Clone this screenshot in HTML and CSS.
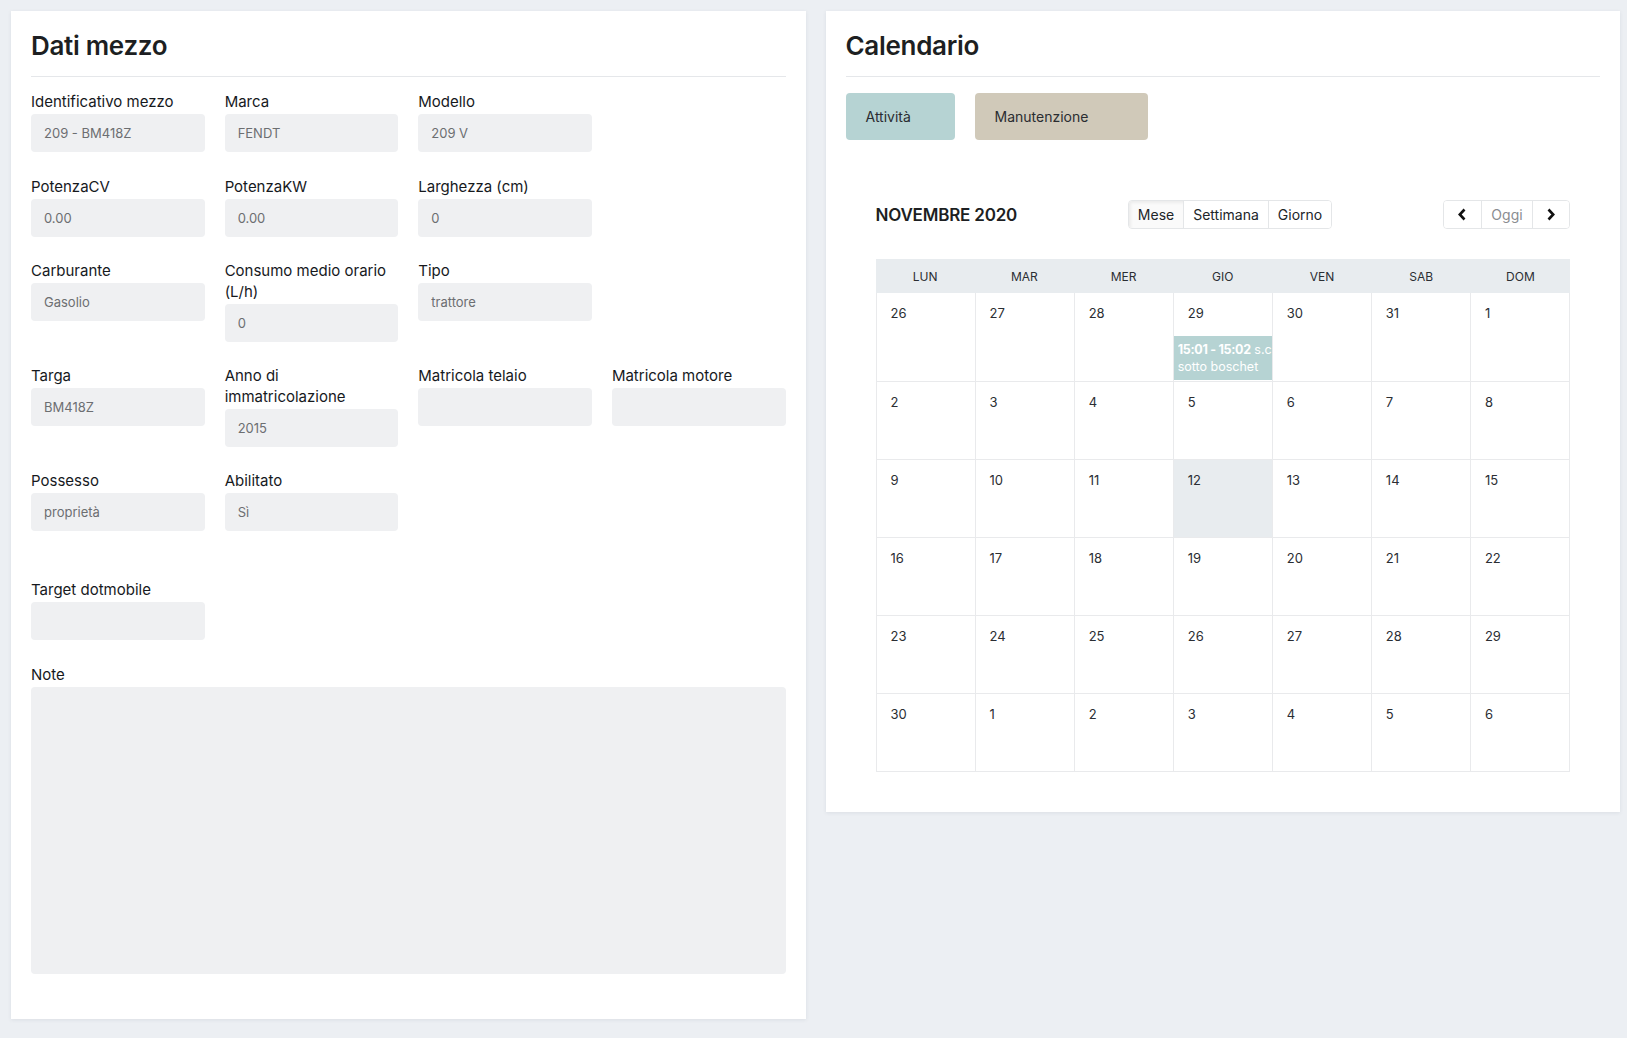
FILE: index.html
```html
<!DOCTYPE html>
<html lang="it">
<head>
<meta charset="utf-8">
<title>Dati mezzo</title>
<link rel="stylesheet" href="styles.css">
</head>
<body>
<main class="page">
  <section class="card">
    <h2 class="card-title">Dati mezzo</h2>
    <div class="form">
      <div class="form-row">
        <div class="field"><label>Identificativo mezzo</label><input class="control" type="text" readonly value="209 - BM418Z"></div>
        <div class="field"><label>Marca</label><input class="control" type="text" readonly value="FENDT"></div>
        <div class="field"><label>Modello</label><input class="control" type="text" readonly value="209 V"></div>
      </div>
      <div class="form-row">
        <div class="field"><label>PotenzaCV</label><input class="control" type="text" readonly value="0.00"></div>
        <div class="field"><label>PotenzaKW</label><input class="control" type="text" readonly value="0.00"></div>
        <div class="field"><label>Larghezza (cm)</label><input class="control" type="text" readonly value="0"></div>
      </div>
      <div class="form-row">
        <div class="field"><label>Carburante</label><input class="control" type="text" readonly value="Gasolio"></div>
        <div class="field"><label>Consumo medio orario (L/h)</label><input class="control" type="text" readonly value="0"></div>
        <div class="field"><label>Tipo</label><input class="control" type="text" readonly value="trattore"></div>
      </div>
      <div class="form-row">
        <div class="field"><label>Targa</label><input class="control" type="text" readonly value="BM418Z"></div>
        <div class="field"><label>Anno di immatricolazione</label><input class="control" type="text" readonly value="2015"></div>
        <div class="field"><label>Matricola telaio</label><input class="control" type="text" readonly value=""></div>
        <div class="field"><label>Matricola motore</label><input class="control" type="text" readonly value=""></div>
      </div>
      <div class="form-row">
        <div class="field"><label>Possesso</label><input class="control" type="text" readonly value="proprietà"></div>
        <div class="field"><label>Abilitato</label><input class="control" type="text" readonly value="Sì"></div>
      </div>
      <div class="form-row form-row-spaced">
        <div class="field"><label>Target dotmobile</label><input class="control" type="text" readonly value=""></div>
      </div>
      <div class="field"><label>Note</label><textarea class="control textarea" readonly></textarea></div>
    </div>
  </section>

  <section class="card">
    <h2 class="card-title">Calendario</h2>
    <div class="legend">
      <span class="legend-item legend-attivita">Attività</span>
      <span class="legend-item legend-manutenzione">Manutenzione</span>
    </div>

    <div class="calendar">
      <div class="cal-toolbar">
        <h3 class="cal-title">NOVEMBRE 2020</h3>
        <div class="btn-group">
          <button class="btn active">Mese</button>
          <button class="btn">Settimana</button>
          <button class="btn">Giorno</button>
        </div>
        <div class="btn-group">
          <button class="btn btn-icon" aria-label="Precedente"><svg width="10" height="13" viewBox="0 0 10 13"><polyline points="7.5,1.5 2.8,6.5 7.5,11.5" fill="none" stroke="#111" stroke-width="2.6"/></svg></button>
          <button class="btn btn-today">Oggi</button>
          <button class="btn btn-icon" aria-label="Successivo"><svg width="10" height="13" viewBox="0 0 10 13"><polyline points="2.5,1.5 7.2,6.5 2.5,11.5" fill="none" stroke="#111" stroke-width="2.6"/></svg></button>
        </div>
      </div>

      <div class="cal-head">
        <div>LUN</div><div>MAR</div><div>MER</div><div>GIO</div><div>VEN</div><div>SAB</div><div>DOM</div>
      </div>
      <div class="cal-body">
        <div class="day"><span class="num">26</span></div>
        <div class="day"><span class="num">27</span></div>
        <div class="day"><span class="num">28</span></div>
        <div class="day"><span class="num">29</span>
          <div class="event">
            <div class="event-line"><b>15:01 - 15:02</b> s.c</div>
            <div class="event-line">sotto boschet</div>
          </div>
        </div>
        <div class="day"><span class="num">30</span></div>
        <div class="day"><span class="num">31</span></div>
        <div class="day"><span class="num">1</span></div>

        <div class="day"><span class="num">2</span></div>
        <div class="day"><span class="num">3</span></div>
        <div class="day"><span class="num">4</span></div>
        <div class="day"><span class="num">5</span></div>
        <div class="day"><span class="num">6</span></div>
        <div class="day"><span class="num">7</span></div>
        <div class="day"><span class="num">8</span></div>

        <div class="day"><span class="num">9</span></div>
        <div class="day"><span class="num">10</span></div>
        <div class="day"><span class="num">11</span></div>
        <div class="day today"><span class="num">12</span></div>
        <div class="day"><span class="num">13</span></div>
        <div class="day"><span class="num">14</span></div>
        <div class="day"><span class="num">15</span></div>

        <div class="day"><span class="num">16</span></div>
        <div class="day"><span class="num">17</span></div>
        <div class="day"><span class="num">18</span></div>
        <div class="day"><span class="num">19</span></div>
        <div class="day"><span class="num">20</span></div>
        <div class="day"><span class="num">21</span></div>
        <div class="day"><span class="num">22</span></div>

        <div class="day"><span class="num">23</span></div>
        <div class="day"><span class="num">24</span></div>
        <div class="day"><span class="num">25</span></div>
        <div class="day"><span class="num">26</span></div>
        <div class="day"><span class="num">27</span></div>
        <div class="day"><span class="num">28</span></div>
        <div class="day"><span class="num">29</span></div>

        <div class="day"><span class="num">30</span></div>
        <div class="day"><span class="num">1</span></div>
        <div class="day"><span class="num">2</span></div>
        <div class="day"><span class="num">3</span></div>
        <div class="day"><span class="num">4</span></div>
        <div class="day"><span class="num">5</span></div>
        <div class="day"><span class="num">6</span></div>
      </div>
    </div>
  </section>
</main>
</body>
</html>
```

FILE: styles.css
```css
* { box-sizing: border-box; }

html, body {
  margin: 0;
  padding: 0;
  background: #eceff3;
  font-family: "Inter", "Noto Sans", "Liberation Sans", sans-serif;
  color: #212529;
}

.page {
  display: grid;
  grid-template-columns: 1fr 1fr;
  column-gap: 20px;
  align-items: start;
  padding: 11px 7px 21px 11px;
}

.card {
  background: #fff;
  padding: 20px;
  box-shadow: 0 1px 4px rgba(30, 40, 60, 0.08);
}

.card-title {
  margin: 0;
  font-size: 26px;
  line-height: 29px;
  font-weight: 600;
  letter-spacing: -0.3px;
  color: #1d1f22;
  padding-bottom: 16px;
  border-bottom: 1px solid #e5e7ea;
}

/* ---------- form ---------- */
.form { padding-top: 15px; }

.form-row {
  display: grid;
  grid-template-columns: repeat(4, 1fr);
  column-gap: 20px;
}

.form-row-spaced { margin-top: 24.5px; }

.field {
  margin-bottom: 24.6px;
  min-width: 0;
}

.field label {
  display: block;
  padding-right: 8px;
  font-size: 15px;
  line-height: 20.5px;
  font-weight: 400;
  color: #16191d;
  margin-bottom: 1.5px;
}

.control {
  display: block;
  width: 100%;
  height: 38px;
  border: none;
  outline: none;
  border-radius: 4px;
  background: #eff0f2;
  padding: 0 13px;
  font-family: inherit;
  font-size: 13px;
  color: #6c6e71;
}

.textarea {
  height: 287px;
  resize: none;
}

/* ---------- legend ---------- */
.legend {
  display: flex;
  gap: 20px;
  margin-top: 16px;
}

.legend-item {
  display: flex;
  align-items: center;
  height: 47px;
  padding-left: 20px;
  border-radius: 4px;
  font-size: 14px;
  color: #2a2d31;
}

.legend-attivita { width: 109px; background: #b6d3d3; }
.legend-manutenzione { width: 173px; background: #d0c9b9; }

/* ---------- calendar ---------- */
.calendar {
  margin: 60px 30px 20px 30px;
}

.cal-toolbar {
  display: flex;
  align-items: center;
  justify-content: space-between;
  height: 29px;
  margin-bottom: 30px;
}

.cal-title {
  margin: 0;
  font-size: 17px;
  font-weight: 600;
  letter-spacing: -0.2px;
  color: #1d1f22;
}

.btn-group {
  display: flex;
  height: 29px;
  border: 1px solid #e4e6e8;
  border-radius: 4px;
  overflow: hidden;
}

.btn {
  display: flex;
  align-items: center;
  justify-content: center;
  height: 100%;
  margin: 0;
  padding: 0 9px;
  border: none;
  border-left: 1px solid #e4e6e8;
  background: #fff;
  font-family: inherit;
  font-size: 14px;
  color: #212529;
}

.btn:first-child { border-left: none; }

.btn.active {
  background: #fafafa;
  box-shadow: inset 2px 2px 3px rgba(0, 0, 0, 0.06);
}

.btn-icon { width: 37px; padding: 0; }
.btn-today { width: 51px; color: #8a8d91; }

.cal-head {
  display: grid;
  grid-template-columns: repeat(7, 1fr);
  height: 34px;
  background: #e8ecef;
}

.cal-head div {
  display: flex;
  align-items: center;
  justify-content: center;
  font-size: 12px;
  color: #2b2e33;
}

.cal-body {
  display: grid;
  grid-template-columns: repeat(7, 1fr);
  grid-template-rows: 89px repeat(5, 78px);
  border-left: 1px solid #e9eaec;
}

.day {
  min-width: 0;
  padding-top: 10px;
  border-right: 1px solid #e9eaec;
  border-bottom: 1px solid #e9eaec;
  display: flex;
  flex-direction: column;
}

.day.today { background: #e8ecef; }

.num {
  display: block;
  padding-left: 14px;
  font-size: 13px;
  line-height: 20px;
  color: #2b2e33;
}

.event {
  margin-top: 13px;
  height: 44px;
  padding: 5px 0 0 4px;
  background: #b6d3d3;
  color: #fff;
  overflow: hidden;
}

.event-line {
  white-space: nowrap;
  overflow: hidden;
  font-size: 12.5px;
  line-height: 17px;
}

.event-line b { font-weight: 700; letter-spacing: -0.3px; }
```
